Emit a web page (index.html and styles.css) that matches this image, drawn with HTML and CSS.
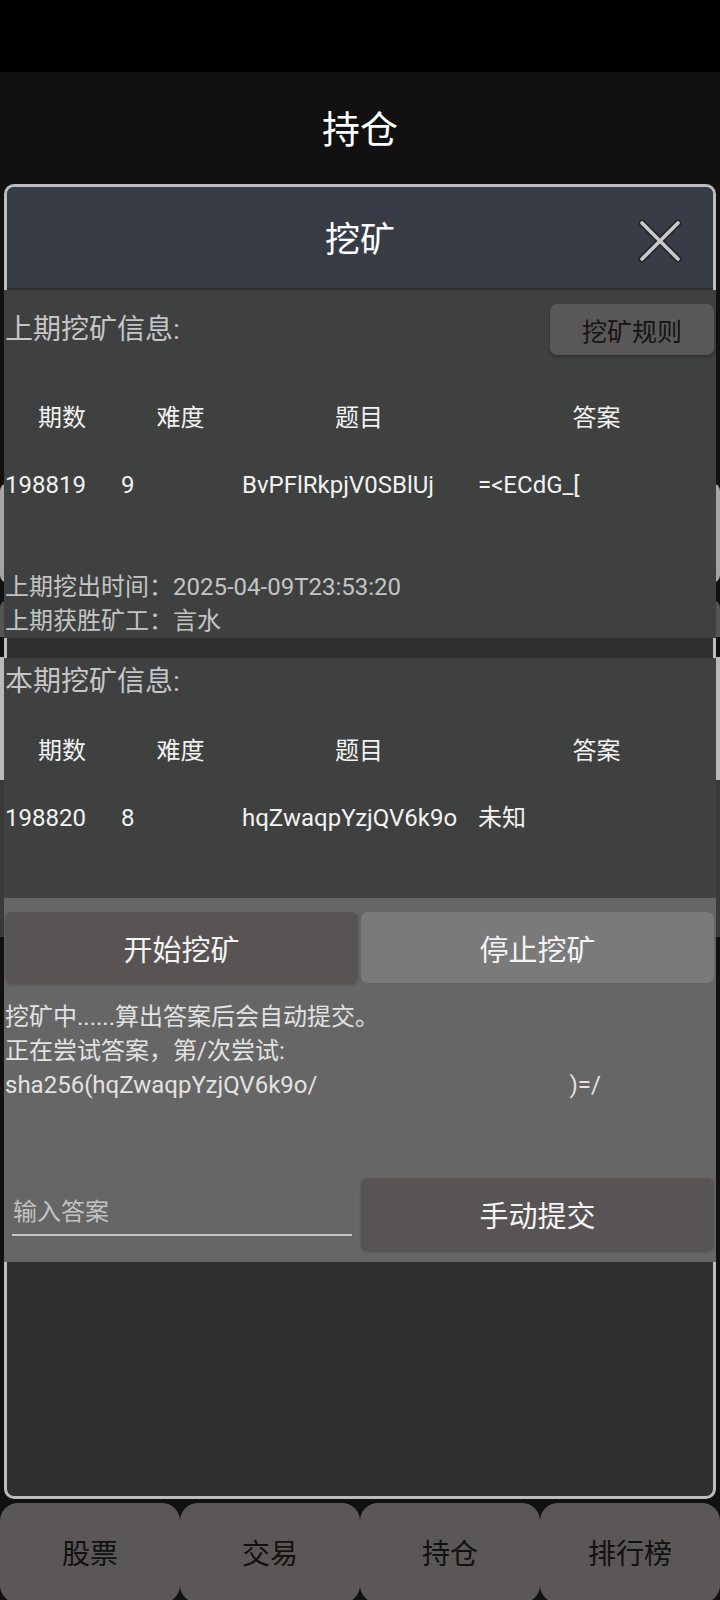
FILE: index.html
```html
<!DOCTYPE html>
<html lang="zh-CN">
<head>
<meta charset="utf-8">
<title>持仓</title>
<link rel="stylesheet" href="styles.css">
</head>
<body>
<div class="statusbar"></div>
<header class="appbar"><h1 class="appbar-title">持仓</h1></header>
<main class="page">
  <div class="bg-card bg-card-a"></div>
  <div class="bg-card bg-card-mid"></div>
  <div class="bg-card bg-card-b"></div>
  <div class="bg-card bg-card-c"></div>
</main>
<nav class="tabs">
  <div class="tab">股票</div>
  <div class="tab">交易</div>
  <div class="tab">持仓</div>
  <div class="tab">排行榜</div>
</nav>

<div class="dialog">
  <div class="dialog-head">
    <h2 class="dialog-title">挖矿</h2>
    <svg class="close" width="44" height="44" viewBox="0 0 44 44">
      <path d="M4 4 L40 40 M40 4 L4 40" stroke="#23272e" stroke-width="7" stroke-linecap="round" fill="none"/>
      <path d="M4 4 L40 40 M40 4 L4 40" stroke="#c9c9c9" stroke-width="3.6" stroke-linecap="round" fill="none"/>
    </svg>
  </div>

  <section class="info info-last">
    <div class="info-top">
      <div class="info-heading">上期挖矿信息:</div>
      <div class="rule-btn">挖矿规则</div>
    </div>
    <div class="table table-last">
      <div class="th">期数</div><div class="th">难度</div><div class="th">题目</div><div class="th">答案</div>
      <div class="td">198819</div><div class="td">9</div><div class="td">BvPFlRkpjV0SBlUj</div><div class="td">=&lt;ECdG_[</div>
    </div>
    <div class="meta">
      <div>上期挖出时间：2025-04-09T23:53:20</div>
      <div>上期获胜矿工：言水</div>
    </div>
  </section>

  <section class="info info-cur">
    <div class="info-heading info-heading-cur">本期挖矿信息:</div>
    <div class="table table-cur">
      <div class="th">期数</div><div class="th">难度</div><div class="th">题目</div><div class="th">答案</div>
      <div class="td">198820</div><div class="td">8</div><div class="td">hqZwaqpYzjQV6k9o</div><div class="td">未知</div>
    </div>
  </section>

  <section class="controls">
    <div class="btn-row">
      <div class="btn btn-dark">开始挖矿</div>
      <div class="btn btn-light">停止挖矿</div>
    </div>
    <div class="status">
      <div>挖矿中......算出答案后会自动提交。</div>
      <div>正在尝试答案，第/次尝试:</div>
      <div>sha256(hqZwaqpYzjQV6k9o/<span class="spacer"></span>)=/</div>
    </div>
    <div class="submit-row">
      <input class="answer" type="text" placeholder="输入答案">
      <div class="btn btn-dark btn-submit">手动提交</div>
    </div>
  </section>
</div>
</body>
</html>
```

FILE: styles.css
```css
html, body {
  margin: 0;
  padding: 0;
}
body {
  width: 720px;
  height: 1600px;
  overflow: hidden;
  position: relative;
  background: #111111;
  font-family: "Roboto", "Noto Sans CJK SC", sans-serif;
  color: #f0f0f0;
}

.statusbar {
  height: 72px;
  background: #000;
}
.appbar {
  height: 112px;
  background: #111111;
  display: flex;
  align-items: center;
  justify-content: center;
}
.appbar-title {
  margin: 0;
  font-size: 38px;
  font-weight: 400;
  color: #ffffff;
  line-height: 1;
  transform: translateY(2px);
}

.page {
  height: 1319px;
  display: flex;
  flex-direction: column;
}
.bg-card {
  border-radius: 8px;
  flex: none;
}
.bg-card-a {
  margin-top: 299px;
  height: 100px;
  background: #a6a6a6;
}
.bg-card-mid {
  margin-top: 17px;
  height: 37px;
  background: #555555;
  border-radius: 8px 8px 0 0;
}
.bg-card-b {
  margin-top: 20px;
  height: 123px;
  background: #bababa;
  border-radius: 0;
}
.bg-card-c {
  height: 157px;
  background: #3a3a3a;
  border-radius: 0;
}

.tabs {
  height: 97px;
  display: flex;
}
.tab {
  width: 180px;
  height: 100px;
  background: #5a5756;
  border-radius: 18px;
  display: flex;
  align-items: center;
  justify-content: center;
  font-size: 28px;
  color: #111;
  padding-bottom: 3px;
  box-sizing: border-box;
}

/* dialog overlay */
.dialog {
  position: absolute;
  left: 4px;
  top: 184px;
  width: 712px;
  height: 1315px;
  box-sizing: border-box;
  border: 3px solid #bdbdbd;
  border-radius: 10px;
  background: #303030;
  display: flex;
  flex-direction: column;
}
.dialog-head {
  height: 101px;
  background: #373c46;
  border-bottom: 2px solid #2c2e2e;
  border-radius: 7px 7px 0 0;
  display: flex;
  align-items: center;
  justify-content: center;
  position: relative;
}
.dialog-title {
  margin: 0;
  font-size: 35px;
  font-weight: 400;
  color: #ffffff;
  line-height: 1;
  transform: translateY(3px);
}
.close {
  position: absolute;
  left: 631px;
  top: 32px;
}

.info {
  margin: 0 -3px;
  background: #3e413f;
}
.info-last {
  height: 348px;
}
.info-cur {
  margin-top: 20px;
  height: 240px;
  padding-top: 4px;
  box-sizing: border-box;
}
.info-top {
  margin-top: 14px;
  height: 51px;
  display: flex;
  align-items: center;
  justify-content: space-between;
}
.info-heading {
  font-size: 28px;
  color: #c6c6c6;
  padding-left: 1px;
  line-height: 40px;
}
.rule-btn {
  width: 164px;
  height: 51px;
  margin-right: 2px;
  background: #5a5757;
  border-radius: 7px;
  color: #141414;
  font-size: 25px;
  display: flex;
  align-items: center;
  justify-content: center;
  box-shadow: 0 2px 3px rgba(0, 0, 0, 0.25);
}

.table {
  display: grid;
  grid-template-columns: 116px 121px 236px 1fr;
  grid-template-rows: 60px 74px;
  font-size: 24px;
}
.table-last {
  margin-top: 33px;
}
.table-cur {
  margin-top: 19px;
}
.th {
  text-align: center;
  line-height: 60px;
  color: #f2f2f2;
}
.td {
  line-height: 74px;
  padding-left: 1px;
  color: #f2f2f2;
  white-space: nowrap;
}

.meta {
  margin-top: 48px;
  font-size: 24px;
  line-height: 34px;
  color: #c4c4c4;
  padding-left: 1px;
}

.controls {
  margin: 0 -3px;
  height: 364px;
  background: #666666;
  display: flex;
  flex-direction: column;
}
.btn-row {
  margin-top: 14px;
  display: flex;
  gap: 3px;
  padding-left: 1px;
}
.btn {
  width: 353px;
  height: 71px;
  border-radius: 7px;
  display: flex;
  align-items: center;
  justify-content: center;
  font-size: 29px;
  color: #f4f4f4;
  box-shadow: 0 2px 3px rgba(0, 0, 0, 0.22);
}
.btn-dark {
  background: #585453;
}
.btn-light {
  background: #7a7a7a;
  box-shadow: none;
}
.status {
  margin-top: 17px;
  padding-left: 1px;
  font-size: 24px;
  line-height: 34px;
  color: #e2e2e2;
  white-space: nowrap;
}
.spacer {
  display: inline-block;
  width: 252px;
}
.submit-row {
  margin-top: auto;
  margin-bottom: 12px;
  display: flex;
  align-items: flex-end;
  justify-content: space-between;
}
.answer {
  margin: 0 0 14px 8px;
  width: 340px;
  height: 44px;
  box-sizing: border-box;
  padding: 0 0 2px 1px;
  background: transparent;
  border: none;
  border-bottom: 2px solid #c6c6c6;
  outline: none;
  font-family: "Roboto", "Noto Sans CJK SC", sans-serif;
  font-size: 24px;
  color: #e0e0e0;
}
.answer::placeholder {
  color: #c2c2c2;
}
.btn-submit {
  height: 72px;
  margin-right: 2px;
}
```
